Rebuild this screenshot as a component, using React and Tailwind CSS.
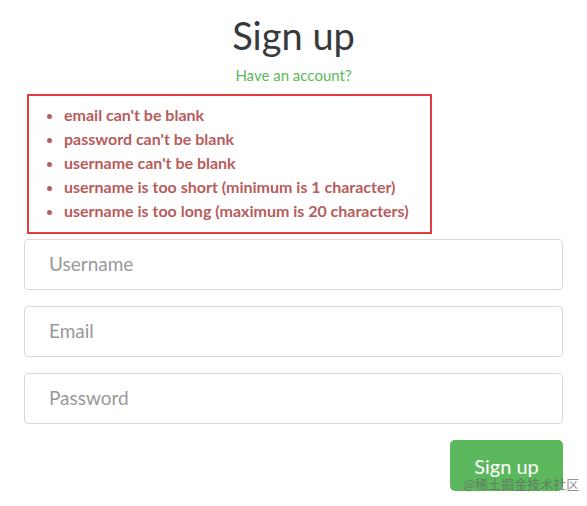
export default function App() {
  const errors = [
    "email can't be blank",
    "password can't be blank",
    "username can't be blank",
    "username is too short (minimum is 1 character)",
    "username is too long (maximum is 20 characters)",
  ];
  return (
    <div className="relative w-[587px] h-[506px] bg-white" style={{ fontFamily: "Lato, 'Noto Sans', sans-serif" }}>
      <div className="flex flex-col pt-[12px] px-[24px]">
        <h1 className="text-center text-[38px] leading-[46px] text-[#373a3c]">Sign up</h1>
        <p className="text-center text-[15px] leading-[20px] text-[#5cb85c] mt-[7px]">Have an account?</p>
        <div className="ml-[3px] mt-[9px] w-[405px] border-[2px] border-[#e53b3e] pt-[7px] pb-[9px]">
          <ul className="list-disc pl-[35px] text-[#b85c5c] font-bold text-[16px] leading-[24px]">
            {errors.map((e) => (
              <li key={e}>{e}</li>
            ))}
          </ul>
        </div>
        <div className="flex flex-col gap-[16px] mt-[5px]">
          {["Username", "Email", "Password"].map((p) => (
            <div key={p} className="h-[51px] border border-[#d9d9d9] rounded-[4px] flex items-center px-[24px] text-[19px] text-[#999]">
              {p}
            </div>
          ))}
        </div>
        <div className="flex justify-end mt-[16px]">
          <div className="w-[113px] h-[51px] rounded-[5px] bg-[#5cb85c] text-white text-[20px] flex items-center justify-center">Sign up</div>
        </div>
      </div>
      <div className="absolute left-[463px] top-[474px] text-[13px] text-[#666] opacity-70" style={{ fontFamily: "'Noto Sans CJK SC', sans-serif" }}>@稀土掘金技术社区</div>
    </div>
  );
}
